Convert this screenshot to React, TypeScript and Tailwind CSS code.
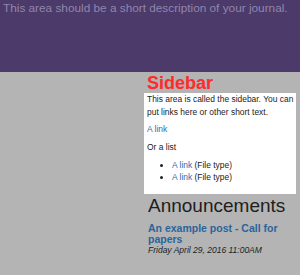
export default function App() {
  return (
    <div className="w-[300px] h-[275px] overflow-hidden bg-[#b4b4b4]" style={{ fontFamily: '"Liberation Sans", Arial, sans-serif' }}>
      <div className="h-[72px] bg-[#4b3a6a] pl-[3px]">
        <p className="text-[11.8px] leading-[16px] text-[#9186ad] whitespace-nowrap">
          This area should be a short description of your journal.
        </p>
      </div>
      <div className="flex">
        <div className="w-[144px] shrink-0" />
        <div className="w-[152px] shrink-0">
          <h2 className="text-[18px] leading-[19px] font-bold text-[#ff2b2b] pl-[3px] pt-[2px]">Sidebar</h2>
          <div className="bg-white pl-[3px] pb-[11px] text-[8.45px] leading-[12.5px] text-[#222]">
            <p>This area is called the sidebar. You can put links here or other short text.</p>
            <p className="mt-[5px] text-[#2f6db0]">A link</p>
            <p className="mt-[5.5px]">Or a list</p>
            <ul className="mt-[5.5px] list-disc pl-[25px] leading-[12px]">
              <li><span className="text-[#2f6db0]">A link</span> (File type)</li>
              <li><span className="text-[#2f6db0]">A link</span> (File type)</li>
            </ul>
          </div>
          <div className="pl-[4px]">
            <h2 className="text-[19px] leading-[22px] text-[#1e1e1e] mt-[1px]">Announcements</h2>
            <p className="text-[10.5px] leading-[11px] font-bold text-[#2a649c] mt-[5.5px]">An example post - Call for papers</p>
            <p className="text-[8.5px] leading-[11px] italic text-[#222]">Friday April 29, 2016 11:00AM</p>
          </div>
        </div>
      </div>
    </div>
  );
}
